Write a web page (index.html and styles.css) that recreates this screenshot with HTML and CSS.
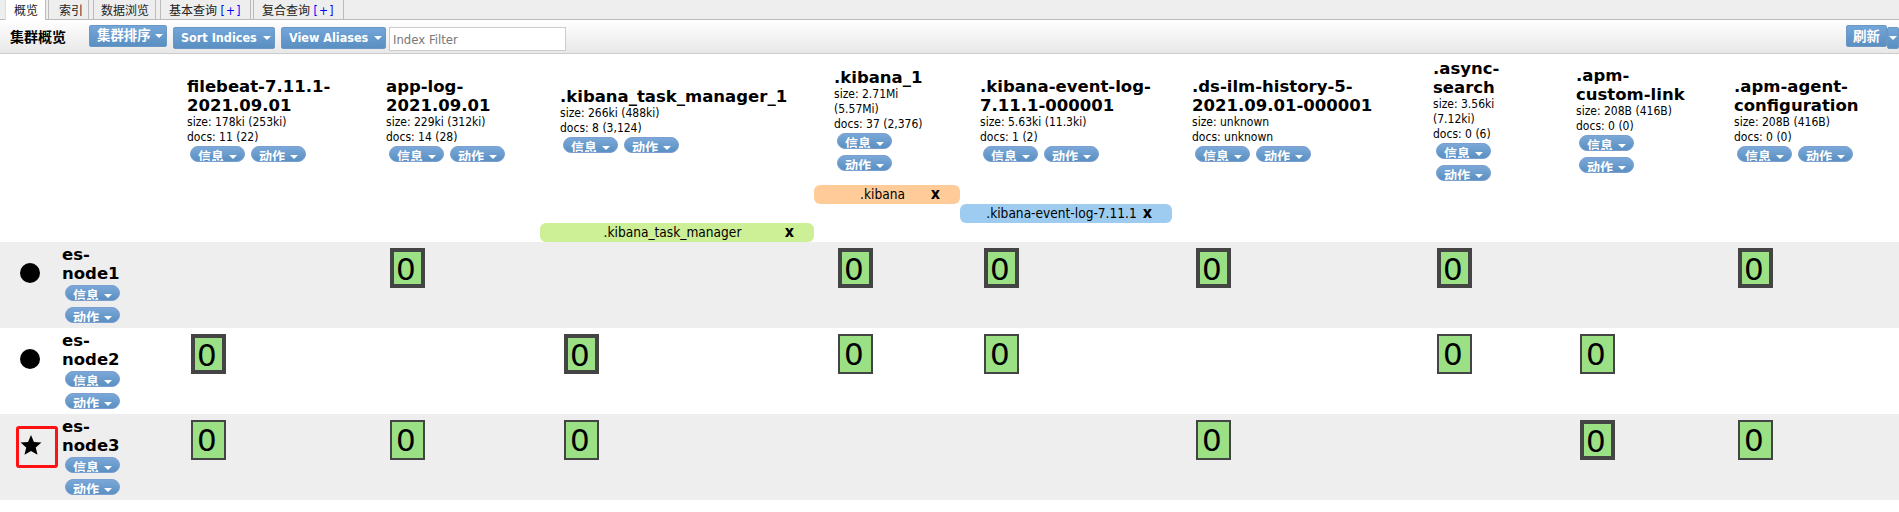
FILE: index.html
```html
<!DOCTYPE html>
<html lang="zh">
<head>
<meta charset="utf-8">
<title>集群概览</title>
<link rel="stylesheet" href="styles.css">
</head>
<body>
<nav class="tabs">
  <a class="tab active t1">概览</a>
  <a class="tab t2">索引</a>
  <a class="tab t3">数据浏览</a>
  <a class="tab t4">基本查询 <b class="plus">[+]</b></a>
  <a class="tab t5">复合查询 <b class="plus">[+]</b></a>
</nav>
<header class="toolbar">
  <h1 class="title">集群概览</h1>
  <button class="tbtn first">集群排序<i class="caret"></i></button>
  <button class="tbtn sort">Sort Indices<i class="caret"></i></button>
  <button class="tbtn view">View Aliases<i class="caret"></i></button>
  <input class="filter" placeholder="Index Filter">
  <div class="refresh"><button class="tbtn rbtn">刷新</button><button class="tbtn rdrop"><i class="caret"></i></button></div>
</header>
<table class="grid">
  <colgroup>
    <col class="c0"><col class="c1"><col class="c2"><col class="c3"><col class="c4"><col class="c5"><col class="c6"><col class="c7"><col class="c8"><col class="c9">
  </colgroup>
  <thead>
    <tr class="heads">
      <th></th>
      <th><h2>filebeat-7.11.1-<br>2021.09.01</h2><p>size: 178ki (253ki)<br>docs: 11 (22)</p><div class="btns"><button class="pill">信息<i class="caret"></i></button><button class="pill">动作<i class="caret"></i></button></div></th>
      <th><h2>app-log-<br>2021.09.01</h2><p>size: 229ki (312ki)<br>docs: 14 (28)</p><div class="btns"><button class="pill">信息<i class="caret"></i></button><button class="pill">动作<i class="caret"></i></button></div></th>
      <th><h2>.kibana_task_manager_1</h2><p>size: 266ki (488ki)<br>docs: 8 (3,124)</p><div class="btns"><button class="pill">信息<i class="caret"></i></button><button class="pill">动作<i class="caret"></i></button></div></th>
      <th><h2>.kibana_1</h2><p>size: 2.71Mi<br>(5.57Mi)<br>docs: 37 (2,376)</p><div class="btns stack"><button class="pill">信息<i class="caret"></i></button><button class="pill">动作<i class="caret"></i></button></div></th>
      <th><h2>.kibana-event-log-<br>7.11.1-000001</h2><p>size: 5.63ki (11.3ki)<br>docs: 1 (2)</p><div class="btns"><button class="pill">信息<i class="caret"></i></button><button class="pill">动作<i class="caret"></i></button></div></th>
      <th><h2>.ds-ilm-history-5-<br>2021.09.01-000001</h2><p>size: unknown<br>docs: unknown</p><div class="btns"><button class="pill">信息<i class="caret"></i></button><button class="pill">动作<i class="caret"></i></button></div></th>
      <th><h2>.async-<br>search</h2><p>size: 3.56ki<br>(7.12ki)<br>docs: 0 (6)</p><div class="btns stack"><button class="pill">信息<i class="caret"></i></button><button class="pill">动作<i class="caret"></i></button></div></th>
      <th><h2>.apm-<br>custom-link</h2><p>size: 208B (416B)<br>docs: 0 (0)</p><div class="btns stack"><button class="pill">信息<i class="caret"></i></button><button class="pill">动作<i class="caret"></i></button></div></th>
      <th><h2>.apm-agent-<br>configuration</h2><p>size: 208B (416B)<br>docs: 0 (0)</p><div class="btns"><button class="pill">信息<i class="caret"></i></button><button class="pill">动作<i class="caret"></i></button></div></th>
    </tr>
    <tr class="alias"><td colspan="4"></td><td class="bar orange"><span>.kibana</span><b class="x">x</b></td><td colspan="5"></td></tr>
    <tr class="alias"><td colspan="5"></td><td class="bar blue"><span>.kibana-event-log-7.11.1</span><b class="x">x</b></td><td colspan="4"></td></tr>
    <tr class="alias"><td colspan="3"></td><td class="bar green"><span>.kibana_task_manager</span><b class="x">x</b></td><td colspan="6"></td></tr>
  </thead>
  <tbody>
    <tr class="odd">
      <td class="node"><div class="nodecell"><i class="dot"></i><div class="nodeinfo"><h3>es-<br>node1</h3><button class="pill">信息<i class="caret"></i></button><button class="pill">动作<i class="caret"></i></button></div></div></td>
      <td></td>
      <td><span class="shard pri">0</span></td>
      <td></td>
      <td><span class="shard pri">0</span></td>
      <td><span class="shard pri">0</span></td>
      <td><span class="shard pri">0</span></td>
      <td><span class="shard pri">0</span></td>
      <td></td>
      <td><span class="shard pri">0</span></td>
    </tr>
    <tr>
      <td class="node"><div class="nodecell"><i class="dot"></i><div class="nodeinfo"><h3>es-<br>node2</h3><button class="pill">信息<i class="caret"></i></button><button class="pill">动作<i class="caret"></i></button></div></div></td>
      <td><span class="shard pri">0</span></td>
      <td></td>
      <td><span class="shard pri">0</span></td>
      <td><span class="shard">0</span></td>
      <td><span class="shard">0</span></td>
      <td></td>
      <td><span class="shard">0</span></td>
      <td><span class="shard">0</span></td>
      <td></td>
    </tr>
    <tr class="odd">
      <td class="node"><div class="nodecell"><div class="master"><svg class="star" viewBox="0 0 24 24"><path d="M12 1l3.200 7.600 8.200.7-6.200 5.400 1.900 8L12 18.500l-7.100 4.200 1.900-8L.6 9.300l8.200-.7z"/></svg></div><div class="nodeinfo"><h3>es-<br>node3</h3><button class="pill">信息<i class="caret"></i></button><button class="pill">动作<i class="caret"></i></button></div></div></td>
      <td><span class="shard">0</span></td>
      <td><span class="shard">0</span></td>
      <td><span class="shard">0</span></td>
      <td></td>
      <td></td>
      <td><span class="shard">0</span></td>
      <td></td>
      <td><span class="shard pri">0</span></td>
      <td><span class="shard">0</span></td>
    </tr>
  </tbody>
</table>
</body>
</html>
```
FILE: styles.css
```css
*, *::after { box-sizing: border-box; }
html, body { margin: 0; padding: 0; background: #fff; overflow: hidden; }
body { font: 12px "DejaVu Sans Condensed", "Noto Sans CJK SC", sans-serif; color: #000; height: 512px; }
.tabs { display: flex; height: 20px; background: #eee; border-bottom: 1px solid #bbb; padding-left: 5px; }
.tab { display: block; height: 19px; line-height: 22px; padding-left: 8px; border-right: 1px solid #bbb; border-left: 1px solid #bbb; font-size: 12px; white-space: nowrap; color: #222; }
.tab.active { background: #fff; height: 20px; border-left-color: #ddd; }
.t1 { width: 41px; }
.t2 { width: 41px; margin-left: 2px; padding-left: 10px; }
.t3 { width: 63px; margin-left: 4px; padding-left: 7px; }
.t4 { width: 91px; margin-left: 4px; }
.t5 { width: 91px; margin-left: 2px; }
.plus { color: #00f; font-weight: normal; letter-spacing: 1.300px; }
.toolbar { display: flex; align-items: flex-start; height: 34px; background: linear-gradient(#fff, #e8e8e8); border-bottom: 1px solid #ccc; padding: 5px 0 0 10px; }
.title { font-size: 14px; font-weight: bold; margin: 0 23px 0 0; line-height: 24px; width: 56px; white-space: nowrap; }
button { font-family: inherit; padding: 0; cursor: pointer; }
.tbtn { height: 22px; margin: 2px 6px 0 0; padding: 0 0 0 7px; color: #fff; font-size: 12.500px; font-weight: bold; line-height: 20px; text-align: left; border: 1px solid #6a97c4; border-radius: 2px; background: linear-gradient(#73a5d8, #5a8fc2); white-space: nowrap; }
.first { width: 78px; margin-top: 0; font-size: 13.400px; }
.sort { width: 102px; }
.view { width: 105px; }
.caret { display: inline-block; width: 0; height: 0; margin-left: 6px; vertical-align: 2px; border-left: 4px solid transparent; border-right: 4px solid transparent; border-top: 4px solid #fff; }
.first .caret { margin-left: 4px; }
.filter { width: 177px; height: 24px; margin: 2px 0 0 -3px; padding: 0 3px; font: 13px "DejaVu Sans Condensed", sans-serif; border: 1px solid #ccc; background: #fff; }
.filter::placeholder { color: #777; opacity: 1; }
.refresh { display: flex; margin-left: auto; }
.tbtn.rbtn { width: 41px; margin: 0; padding: 0; text-align: center; font-size: 13.500px; }
.tbtn.rdrop { width: 12px; margin: 2px 0 0 0; padding: 0; overflow: hidden; }
.rdrop .caret { margin-left: 1px; }
.grid { border-collapse: collapse; table-layout: fixed; width: 1899px; }
.c0 { width: 167px; } .c1 { width: 199px; } .c2 { width: 174px; } .c3 { width: 274px; } .c4 { width: 146px; } .c5 { width: 212px; } .c6 { width: 241px; } .c7 { width: 143px; } .c8 { width: 158px; } .c9 { width: 185px; }
.heads th { height: 131px; padding: 0 0 0 20px; text-align: left; vertical-align: middle; font-weight: normal; white-space: nowrap; }
h2 { margin: 0; font: bold 16.500px/19px "DejaVu Sans", sans-serif; }
th p { margin: 0; font-size: 12px; line-height: 15px; }
.btns { display: flex; gap: 6px; margin: 1px 0 0 3px; }
.btns.stack { flex-direction: column; align-items: flex-start; }
.pill { display: block; width: 55px; height: 16px; overflow: hidden; border: 1px solid #7b9fd0; border-radius: 8px; background: linear-gradient(#7aa8d8, #5a90c2); color: #fff; font-size: 13px; font-weight: bold; line-height: 19px; padding-left: 7px; text-align: left; white-space: nowrap; }
.pill .caret { margin-left: 5px; vertical-align: 2px; }
.alias td { height: 19px; padding: 0; }
.alias .bar { position: relative; text-align: center; padding-right: 9px; border-radius: 6px; font-size: 13.600px; line-height: 19px; white-space: nowrap; }
.orange { background: #fc9; } .blue { background: #9eccf0; } .green { background: #cdef96; }
.x { position: absolute; right: 20px; top: 0; font-size: 16px; line-height: 18px; }
tbody tr { height: 86px; }
tbody td { padding: 6px 0 0 24px; vertical-align: top; }
.odd td { background: #eee; }
tbody td.node { padding: 0; }
.nodecell { display: flex; height: 86px; }
.dot { display: block; width: 20px; height: 20px; margin: 21px 0 0 20px; background: #000; border-radius: 50%; }
.master { width: 20px; height: 20px; margin: 20px 0 0 20px; position: relative; }
.star { display: block; width: 22px; height: 22px; fill: #000; }
.master::after { content: ""; position: absolute; left: -4px; top: -8px; width: 42px; height: 42px; border: 3px solid #f11; border-radius: 3px; }
.nodeinfo { margin: 3px 0 0 22px; }
h3 { margin: 0 0 2px; font: bold 16.500px/19px "DejaVu Sans", sans-serif; }
.nodeinfo .pill { margin: 0 0 6px 3px; }
.shard { display: block; width: 35px; height: 40px; padding-left: 4px; background: #9ce085; border: 2px solid #444; font: 31px/37px "DejaVu Sans", sans-serif; }
.shard.pri { border-width: 4px; padding-left: 2px; line-height: 35px; }
```
